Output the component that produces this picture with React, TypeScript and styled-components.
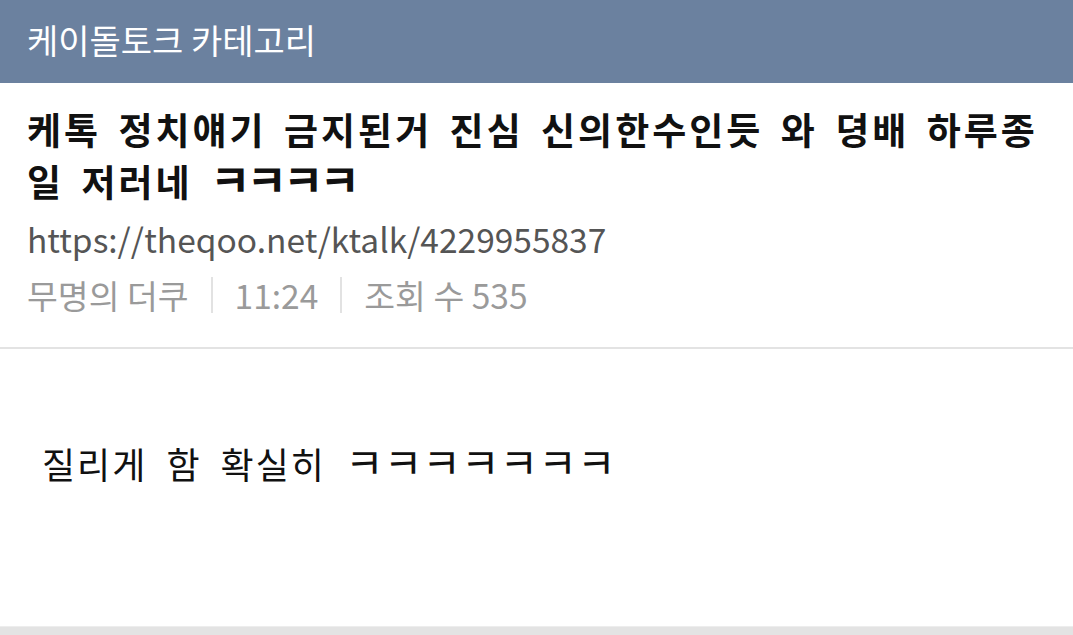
import React from "react";
import styled, { createGlobalStyle } from "styled-components";

const Global = createGlobalStyle`
  html, body { margin: 0; padding: 0; background: #ffffff; }
  body { font-family: "Noto Sans CJK KR", "Noto Sans", sans-serif; }
  * { box-sizing: border-box; }
`;

const Page = styled.div`
  width: 1073px;
  height: 635px;
  display: flex;
  flex-direction: column;
  overflow: hidden;
  background: #fff;
`;

const Header = styled.header`
  height: 83px;
  flex: none;
  background: #6b819f;
  display: flex;
  align-items: center;
  padding: 0 0 5px 27px;
  color: #ffffff;
  font-size: 34px;
  font-weight: 400;
`;

const PostHead = styled.section`
  padding: 20px 20px 0 27px;
  height: 266px;
  flex: none;
  border-bottom: 2px solid #e3e3e3;
`;

const Title = styled.h1`
  margin: 0;
  font-size: 37px;
  font-weight: 700;
  line-height: 52px;
  color: #111;
  letter-spacing: 3px;
  word-spacing: 6px;
  word-break: break-all;
`;

const Laugh = styled.span<{ $size: number; $spacing: number }>`
  font-size: ${(p) => p.$size}px;
  letter-spacing: ${(p) => p.$spacing}px;
  line-height: 1;
`;

const Url = styled.div`
  margin-top: 10px;
  font-size: 33.5px;
  line-height: 44px;
  color: #555;
`;

const Meta = styled.div`
  margin-top: 12px;
  display: flex;
  align-items: center;
  font-size: 33.5px;
  line-height: 44px;
  color: #9a9a9a;
`;

const Sep = styled.span`
  display: inline-block;
  width: 2px;
  height: 36px;
  background: #e2e2e2;
  margin: 0 22px;
`;

const Body = styled.main`
  flex: 1;
  padding: 90px 42px 0 42px;
  font-size: 36px;
  line-height: 48px;
  color: #111;
  letter-spacing: 2px;
  word-spacing: 9px;
`;

const Footer = styled.div`
  height: 9px;
  flex: none;
  background: #e3e3e3;
  border-top: 1px solid #ededed;
`;

export default function App() {
  return (
    <Page>
      <Global />
      <Header>케이돌토크 카테고리</Header>
      <PostHead>
        <Title>
          케톡 정치얘기 금지된거 진심 신의한수인듯 와 뎡배 하루종일 저러네{" "}
          <Laugh $size={44} $spacing={-4}>ㅋㅋㅋㅋ</Laugh>
        </Title>
        <Url>https://theqoo.net/ktalk/4229955837</Url>
        <Meta>
          <span>무명의 더쿠</span>
          <Sep />
          <span>11:24</span>
          <Sep />
          <span>조회 수 535</span>
        </Meta>
      </PostHead>
      <Body>
        질리게 함 확실히 <Laugh $size={42} $spacing={0}>ㅋㅋㅋㅋㅋㅋㅋ</Laugh>
      </Body>
      <Footer />
    </Page>
  );
}
